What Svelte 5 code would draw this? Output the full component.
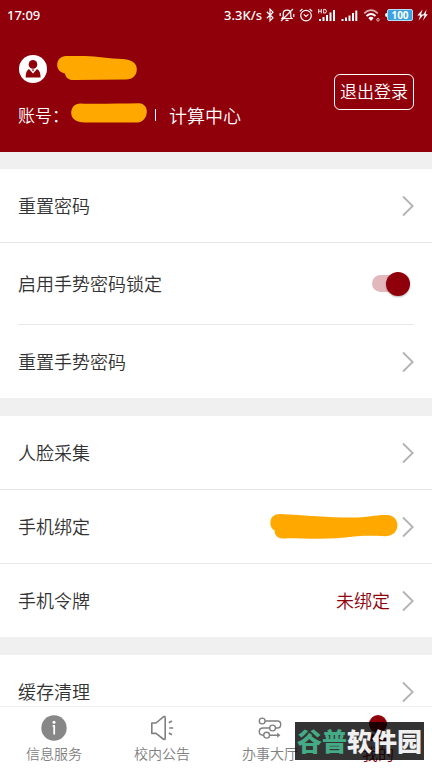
<script lang="ts">
	let gestureLock = $state(true);
	let activeTab = $state('mine');

	const tabs = [
		{ id: 'info', label: '信息服务' },
		{ id: 'notice', label: '校内公告' },
		{ id: 'hall', label: '办事大厅' },
		{ id: 'mine', label: '我的' }
	];
</script>

{#snippet chevron()}
	<svg class="chevron" viewBox="0 0 12 22" aria-hidden="true">
		<path d="M1 1.5 L10.7 11 L1 20.5" fill="none" stroke="#b2b2b2" stroke-width="1.8" />
	</svg>
{/snippet}

<div class="app">
	<header class="header">
		<div class="status-bar">
			<span class="clock">17:09</span>
			<span class="speed">3.3K/s</span>
			<svg width="8" height="14" viewBox="0 0 8 14">
				<path d="M0.8 3.8 L7 9.8 L4 12.8 V1.2 L7 4.2 L0.8 10.2" fill="none" stroke="#fff" stroke-width="1.2" />
			</svg>
			<svg class="bell" width="16" height="14" viewBox="0 0 16 14">
				<path d="M3 10.5 H13 L11.8 8.8 V5.8 C11.8 3.6 10.2 2.2 8 2.2 S4.2 3.6 4.2 5.8 V8.8 Z M6.5 12.4 H9.5 M2 13 L14 1 M1.2 5 V8 M14.8 6 V9" fill="none" stroke="#fff" stroke-width="1.2" />
			</svg>
			<svg class="alarm" width="14" height="14" viewBox="0 0 14 14">
				<circle cx="7" cy="7.6" r="5.3" fill="none" stroke="#fff" stroke-width="1.2" />
				<path d="M4.8 6.4 L7 8.4 L9.4 6.4 M0.8 3.4 L3.4 1 M13.2 3.4 L10.6 1" fill="none" stroke="#fff" stroke-width="1.2" />
			</svg>
			<svg class="signal-hd" width="18" height="14" viewBox="0 0 18 14">
				<path d="M0.7 1 V5.4 M0.7 3.2 H3.3 M3.3 1 V5.4 M5.6 1.4 V5 H6.8 Q8.4 5 8.4 3.2 T6.8 1.4 Z" fill="none" stroke="#fff" stroke-width="0.9" />
				<path d="M1 11 H3 V13 H1 Z M4.5 9 H6.5 V13 H4.5 Z M8 7 H10 V13 H8 Z M11.5 4.5 H13.5 V13 H11.5 Z M15 2 H17 V13 H15 Z" fill="#fff" />
			</svg>
			<svg class="signal" width="17" height="14" viewBox="0 0 17 14">
				<path d="M0.5 11 H2.5 V13 H0.5 Z M4 9.5 H6 V13 H4 Z M7.5 7.5 H9.5 V13 H7.5 Z M11 5 H13 V13 H11 Z M14.3 2.5 H16.3 V13 H14.3 Z" fill="#fff" />
			</svg>
			<svg class="wifi" width="18" height="14" viewBox="0 0 18 14">
				<path d="M1.2 5.4 Q8 -1 14.8 5.4" fill="none" stroke="#fff" stroke-opacity="0.7" stroke-width="1.6" />
				<path d="M3.5 8 Q8 4 12.5 8" fill="none" stroke="#fff" stroke-width="1.8" />
				<path d="M5.3 10 Q8 7.6 10.7 10 L8 13 Z" fill="#fff" />
				<circle cx="15" cy="11.8" r="1.3" fill="none" stroke="#fff" stroke-opacity="0.7" />
			</svg>
			<svg class="battery-tip" width="2" height="4" viewBox="0 0 2 4">
				<path d="M2 0 Q0 0 0 2 T2 4 Z" fill="#fff" />
			</svg>
			<span class="battery">100</span>
			<svg class="bolt" width="11" height="12" viewBox="0 0 11 12">
				<path d="M5.6 0.5 L0.3 6.6 H3.2 L1.6 11.5 L6.6 5.4 H4 Z M9.6 0.5 L5.6 6.6 H7.6 L6 11.5 L10.8 5.2 H8.6 Z" fill="#fff" />
			</svg>
		</div>

		<div class="profile">
			<div class="user">
				<div class="user-row">
					<svg class="avatar" viewBox="0 0 28 28" role="img" aria-label="头像">
						<circle cx="14" cy="14" r="14" fill="#fff" />
						<circle cx="14" cy="9.4" r="4.3" fill="#8f000b" />
						<path d="M10 14 L14 18.6 L18 14 Q21.6 15.8 21.6 22.4 H6.6 Q6.6 15.8 10 14 Z" fill="#8f000b" />
						<path d="M12.8 14.6 H15.2 L14 16.4 Z" fill="#8f000b" />
					</svg>
					<svg class="mask-name" viewBox="0 0 80 26" aria-hidden="true">
						<path d="M9 0 H28 C40 0.2 52 2.6 66 3 C76 3.6 80 8.4 79.8 13.4 C79.6 19.6 75.6 23.2 69 23.4 L18 24 C12 24.4 8.6 21.8 8 17.4 C3 16.6 0.2 13.4 0.2 8.8 C0.2 3.8 4 0 9 0 Z" fill="#ffa800" />
					</svg>
				</div>
				<div class="account-row">
					<span class="account-label">账号：</span>
					<svg class="mask-account" viewBox="0 0 76 20" aria-hidden="true">
						<path d="M10 0.4 C24 1.2 46 0.4 68 0.2 C73.6 0.6 76.2 4.6 75.8 9.6 C75.4 14.6 72 19.4 66.6 19.6 H14 C5 19.4 0.2 15.6 0.2 10 C0.2 4 4 0.2 10 0.4 Z" fill="#ffa800" />
					</svg>
					<span class="divider"></span>
					<span>计算中心</span>
				</div>
			</div>
			<button class="logout" type="button">退出登录</button>
		</div>
	</header>

	<main class="content">
		<section class="group">
			<button class="row" type="button">
				<span class="label">重置密码</span>
				{@render chevron()}
			</button>
			<div class="row tall">
				<label class="label" for="gesture-lock">启用手势密码锁定</label>
				<input id="gesture-lock" class="switch" type="checkbox" role="switch" bind:checked={gestureLock} />
			</div>
			<button class="row" type="button">
				<span class="label">重置手势密码</span>
				{@render chevron()}
			</button>
		</section>

		<section class="group">
			<button class="row" type="button">
				<span class="label">人脸采集</span>
				{@render chevron()}
			</button>
			<button class="row" type="button">
				<span class="label">手机绑定</span>
				<svg class="mask-phone" viewBox="0 0 128 26" aria-hidden="true">
					<path d="M10 0 C34 1.4 60 3.4 80 3.6 C98 3.8 106 0.6 117 1 C124 1.4 127.6 6 127.4 11.6 C127.2 18 122.6 22 116 22.2 C104 22 92 21.4 84 22.6 C62 25.8 38 24.6 18 24.2 C9 25.6 4.8 22.4 4.6 16.4 C1.4 14.6 0.2 11.8 0.4 8.4 C0.6 3 4.4 0 10 0 Z" fill="#ffa800" />
				</svg>
				{@render chevron()}
			</button>
			<button class="row" type="button">
				<span class="label">手机令牌</span>
				<span class="value">未绑定</span>
				{@render chevron()}
			</button>
		</section>

		<section class="group">
			<button class="row" type="button">
				<span class="label">缓存清理</span>
				{@render chevron()}
			</button>
		</section>
	</main>

	<nav class="tab-bar">
		{#each tabs as tab (tab.id)}
			<button class="tab" class:active={activeTab === tab.id} type="button" onclick={() => (activeTab = tab.id)}>
				<svg class="tab-icon" viewBox="0 0 26 26" aria-hidden="true">
					{#if tab.id === 'info'}
						<circle cx="13" cy="13" r="12.7" fill="#878787" />
						<circle cx="13" cy="7.3" r="1.5" fill="#fff" />
						<path d="M11.6 10.8 H13.2 V19.6" fill="none" stroke="#fff" stroke-width="1.8" />
					{:else if tab.id === 'notice'}
						<path d="M2.8 8 H7 L14.4 1.8 Q16.2 0.8 16.2 2.8 V23 Q16.2 25.4 14.2 24 L7 18.4 H2.8 Z" fill="none" stroke="#808080" stroke-width="1.6" stroke-linejoin="round" />
						<path d="M19.8 7.8 L23 6 M20.2 13 H24.2 M19.8 18 L23 19.8" fill="none" stroke="#808080" stroke-width="1.6" />
					{:else if tab.id === 'hall'}
						<g fill="none" stroke="#808080" stroke-width="1.4">
							<circle cx="5.2" cy="6" r="2.9" />
							<circle cx="15.6" cy="13" r="2.9" />
							<circle cx="9.6" cy="20.2" r="2.9" />
							<path d="M8.2 6 H20.4 C24.8 6 24.8 13 20.4 13 H18.6 M12.6 13 H6 C1 13 1 20.2 6 20.2 H6.6 M12.6 20.2 H22" />
							<path d="M20.2 17.6 L23.4 20.2 L20.2 22.8 Z" fill="#808080" stroke="none" />
						</g>
					{:else}
						<circle cx="13" cy="9" r="9" fill="#8f000b" />
						<path d="M4.8 17.4 Q13 23 21.2 17.4 Q24.4 20 24.4 26 H1.6 Q1.6 20 4.8 17.4 Z" fill="#8f000b" />
					{/if}
				</svg>
				<span>{tab.label}</span>
			</button>
		{/each}
		<div class="watermark"><span class="green">谷普</span>软件园</div>
	</nav>
</div>

<style>
	:global(body) {
		margin: 0;
	}

	.app {
		display: flex;
		flex-direction: column;
		height: 100vh;
		background: #f0f0f0;
		color: #333;
		font-family: 'Noto Sans CJK SC', sans-serif;
		font-size: 18px;
		font-weight: 350;
		line-height: 24px;
	}

	button {
		margin: 0;
		border: none;
		background: none;
		color: inherit;
		font: inherit;
		cursor: pointer;
	}

	svg {
		flex: none;
	}

	.header {
		flex: none;
		padding-bottom: 25px;
		background: #8f000b;
		color: #fff;
	}

	.status-bar {
		display: flex;
		align-items: center;
		height: 30px;
		padding: 0 4px 0 7px;
		font-family: 'Noto Sans', sans-serif;
		font-size: 13px;
		font-weight: 500;
	}

	.clock {
		flex: 1;
	}

	.speed {
		margin-right: 4px;
	}

	.bell,
	.signal-hd,
	.signal,
	.wifi {
		margin-left: 5px;
	}

	.alarm,
	.battery-tip,
	.bolt {
		margin-left: 4px;
	}

	.battery {
		box-sizing: border-box;
		width: 26px;
		border: 1px solid #b9dff3;
		border-radius: 2px;
		background: #3ba3df;
		font-size: 10px;
		font-weight: 700;
		line-height: 10px;
		text-align: center;
	}

	.profile {
		display: flex;
		align-items: center;
		justify-content: space-between;
		padding: 24px 18px 0;
	}

	.user-row {
		display: flex;
		align-items: center;
		gap: 10px;
		height: 30px;
		padding-left: 1px;
	}

	.avatar {
		width: 28px;
		height: 28px;
	}

	.mask-name {
		width: 80px;
		height: 26px;
	}

	.account-row {
		display: flex;
		align-items: center;
		height: 24px;
		margin-top: 19px;
	}

	.account-label {
		margin-right: 2px;
		font-size: 17px;
	}

	.mask-account {
		width: 76px;
		height: 20px;
		margin-bottom: 4px;
	}

	.divider {
		width: 1px;
		height: 12px;
		margin: 0 13px 0 8px;
		background: #fff;
	}

	.logout {
		height: 36px;
		margin-top: 2px;
		padding: 0 5px 2px;
		border: 1px solid #fff;
		border-radius: 6px;
		font-size: 17px;
	}

	.content {
		flex: 1;
		min-height: 0;
		padding-top: 17px;
		overflow-y: auto;
		scrollbar-width: none;
	}

	.group {
		margin-bottom: 18px;
		background: #fff;
	}

	.row {
		display: flex;
		align-items: center;
		box-sizing: border-box;
		width: 100%;
		min-height: 74px;
		padding: 0 18px;
		border-bottom: 1px solid #e8e8e8;
		text-align: left;
	}

	.row:last-child {
		min-height: 73px;
		border-bottom: none;
	}

	.row.tall {
		width: auto;
		min-height: 82px;
		margin: 0 18px;
		padding: 0;
	}

	.label,
	.value {
		padding-bottom: 2px;
	}

	.label {
		flex: 1;
	}

	.value {
		margin-right: 12px;
		color: #8f000b;
	}

	.chevron {
		width: 12px;
		height: 22px;
	}

	.mask-phone {
		width: 128px;
		height: 26px;
		margin-right: 4px;
	}

	.switch {
		appearance: none;
		display: flex;
		align-items: center;
		width: 38px;
		height: 17px;
		margin: 0 4px 0 0;
		border-radius: 9px;
		background: #ccc;
		cursor: pointer;
	}

	.switch::before {
		content: '';
		width: 24px;
		height: 24px;
		border-radius: 50%;
		background: #fafafa;
		box-shadow: 0 1px 2px rgba(0, 0, 0, 0.3);
	}

	.switch:checked {
		justify-content: flex-end;
		background: #e2b8bd;
	}

	.switch:checked::before {
		background: #8f000b;
	}

	.tab-bar {
		position: relative;
		display: flex;
		flex: none;
		border-top: 1px solid #f0f0f0;
		background: #fff;
	}

	.tab {
		display: flex;
		flex: 1;
		flex-direction: column;
		align-items: center;
		padding: 8px 0 3px;
		color: #808080;
		font-size: 14px;
		line-height: 24px;
	}

	.tab.active {
		color: #8f000b;
		font-size: 16px;
	}

	.tab-icon {
		width: 26px;
		height: 26px;
	}

	/* site stamp over the corner of the tab bar */
	.watermark {
		position: absolute;
		right: 8px;
		bottom: 8px;
		width: 129px;
		height: 38px;
		background: rgba(0, 0, 0, 0.8);
		color: #f0f0f0;
		font-size: 25px;
		font-weight: 900;
		line-height: 36px;
		text-align: center;
		pointer-events: none;
	}

	.green {
		color: #45ab86;
	}
</style>
